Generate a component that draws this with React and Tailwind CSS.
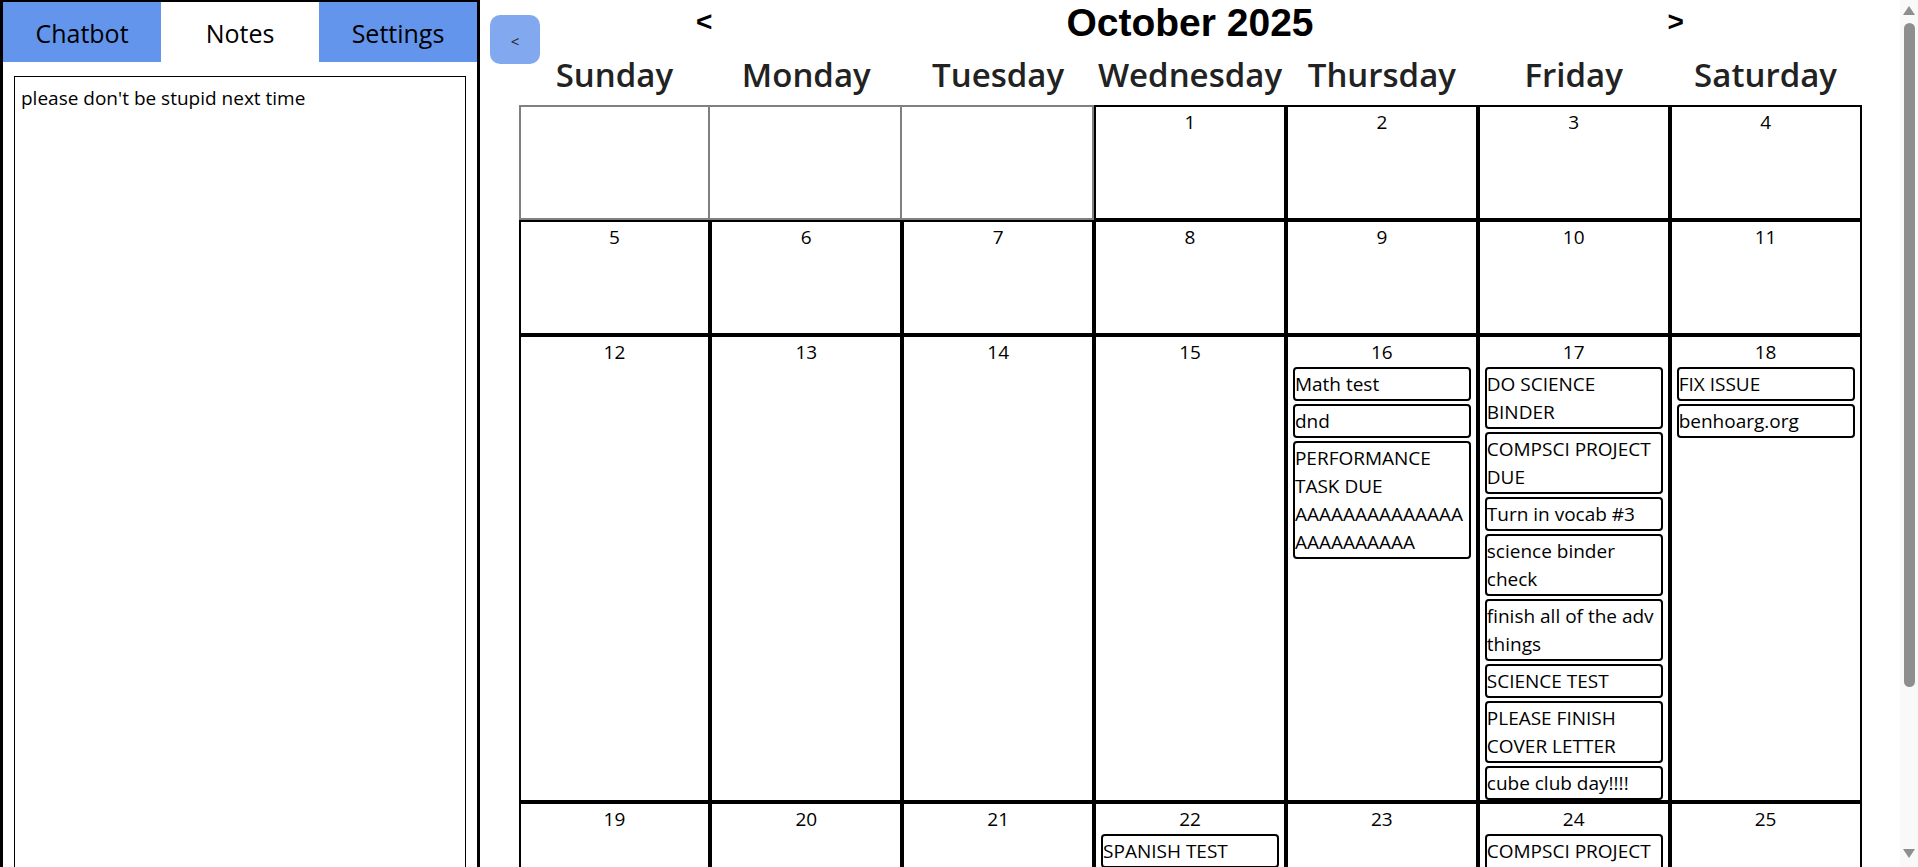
import { useState } from 'react'

const WEEKDAYS = ['Sunday', 'Monday', 'Tuesday', 'Wednesday', 'Thursday', 'Friday', 'Saturday']

const EVENTS = {
  16: ['Math test', 'dnd', 'PERFORMANCE TASK DUE AAAAAAAAAAAAAAAAAAAAAAAA'],
  17: [
    'DO SCIENCE BINDER',
    'COMPSCI PROJECT DUE',
    'Turn in vocab #3',
    'science binder check',
    'finish all of the adv things',
    'SCIENCE TEST',
    'PLEASE FINISH COVER LETTER',
    'cube club day!!!!',
  ],
  18: ['FIX ISSUE', 'benhoarg.org'],
  22: ['SPANISH TEST'],
  24: ['COMPSCI PROJECT DUE'],
}

function buildWeeks(year, month) {
  const first = new Date(year, month, 1).getDay()
  const total = new Date(year, month + 1, 0).getDate()
  const cells = []
  for (let i = 0; i < first; i++) cells.push(null)
  for (let d = 1; d <= total; d++) cells.push(d)
  while (cells.length % 7) cells.push(null)
  const weeks = []
  for (let i = 0; i < cells.length; i += 7) weeks.push(cells.slice(i, i + 7))
  return weeks
}

function DayCell({ day, prevEmpty }) {
  if (day === null) {
    return (
      <div
        className={`min-h-[115px] border-2 border-[#808080] ${prevEmpty ? 'border-l-0' : ''}`}
      />
    )
  }
  const events = EVENTS[day] || []
  return (
    <div className="min-h-[115px] border-2 border-black flex flex-col">
      <div className="text-center leading-[30px]">{day}</div>
      <div className="flex flex-col gap-[3px]">
        {events.map((ev, i) => (
          <div
            key={i}
            className="mx-[5px] border-2 border-black rounded-[4px] py-px leading-[28px] break-words"
          >
            {ev}
          </div>
        ))}
      </div>
    </div>
  )
}

function Scrollbar() {
  return (
    <div className="w-[18px] shrink-0 h-full bg-[#f9f9f9] flex flex-col items-center">
      <svg width="12" height="9" viewBox="0 0 12 9" className="mt-[6px] shrink-0">
        <polygon points="6,0 12,9 0,9" fill="#8e8e8e" />
      </svg>
      <div className="mt-[8px] w-[11px] h-[664px] shrink-0 rounded-full bg-[#8e8e8e]" />
      <div className="flex-1" />
      <svg width="12" height="9" viewBox="0 0 12 9" className="mb-[9px] shrink-0">
        <polygon points="0,0 12,0 6,9" fill="#8e8e8e" />
      </svg>
    </div>
  )
}

export default function App() {
  const [tab, setTab] = useState('Notes')
  const weeks = buildWeeks(2025, 9)

  return (
    <div className="h-screen w-full overflow-hidden flex bg-white text-black font-['Open_Sans',sans-serif] text-[19px]">
      {/* Sidebar */}
      <aside className="w-[480px] shrink-0 h-[1100px] border-x-[3px] border-t-2 border-black flex flex-col">
        <div className="grid grid-cols-3 h-[60px] shrink-0">
          {['Chatbot', 'Notes', 'Settings'].map(t => (
            <button
              key={t}
              onClick={() => setTab(t)}
              className={`flex items-center justify-center pt-[4px] text-[25px] text-black ${tab === t ? 'bg-white' : 'bg-[#6495ed]'}`}
            >
              {t}
            </button>
          ))}
        </div>
        <textarea
          defaultValue="please don't be stupid next time"
          className="mx-[11px] mt-[14px] h-[1000px] shrink-0 border border-black px-[6px] pt-[8px] text-[19px] leading-[26px] outline-none resize-none"
        />
      </aside>

      {/* Calendar */}
      <main className="relative flex-1 h-full flex flex-col items-center">
        <button className="absolute left-[10px] top-[15px] w-[50px] h-[49px] rounded-[10px] bg-[#82a9ef] text-[15px] text-[#222] flex items-center justify-center pt-[3px]">
          &lt;
        </button>

        <div className="h-[55px] shrink-0 pt-[3px] flex items-baseline justify-center gap-[354px] font-['Liberation_Sans',Arial,sans-serif] font-bold">
          <button className="self-start mt-[5px] text-[28px] leading-none">&lt;</button>
          <h1 className="text-[39px] leading-none">October 2025</h1>
          <button className="self-start mt-[5px] text-[28px] leading-none">&gt;</button>
        </div>

        <div className="grid grid-cols-7 w-[1343px] shrink-0 text-center text-[33px] leading-[40px] font-semibold text-[#222]">
          {WEEKDAYS.map(d => (
            <div key={d}>{d}</div>
          ))}
        </div>

        <div className="mt-[10px] w-[1343px] shrink-0 flex flex-col">
          {weeks.map((week, wi) => (
            <div key={wi} className="grid grid-cols-7">
              {week.map((day, di) => (
                <DayCell
                  key={di}
                  day={day}
                  prevEmpty={di > 0 && week[di - 1] === null && day === null}
                />
              ))}
            </div>
          ))}
        </div>
      </main>

      <Scrollbar />
    </div>
  )
}
